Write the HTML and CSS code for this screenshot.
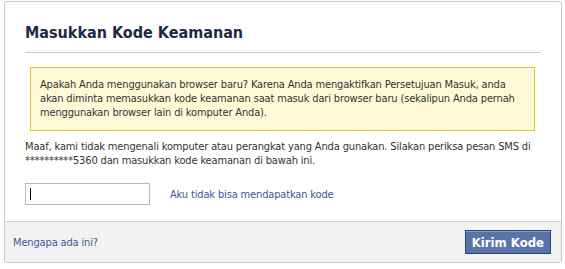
FILE: index.html
```html
<!DOCTYPE html>
<html lang="id">
<head>
    <meta charset="UTF-8">
    <meta name="viewport" content="width=device-width, initial-scale=1.0">
    <title>Masukkan Kode Keamanan</title>
    <link rel="stylesheet" href="styles.css">
</head>
<body>
    <div class="dialog">
        <div class="dialog-body">
            <h2 class="dialog-title">Masukkan Kode Keamanan</h2>

            <div class="notice">
                Apakah Anda menggunakan browser baru? Karena Anda mengaktifkan Persetujuan Masuk, anda
                akan diminta memasukkan kode keamanan saat masuk dari browser baru (sekalipun Anda pernah
                menggunakan browser lain di komputer Anda).
            </div>

            <p class="intro">
                Maaf, kami tidak mengenali komputer atau perangkat yang Anda gunakan. Silakan periksa pesan SMS di
                **********5360 dan masukkan kode keamanan di bawah ini.
            </p>

            <div class="code-row">
                <span class="code-field">
                    <input type="text" id="code" name="code" class="code-input">
                </span>
                <a href="#" class="link">Aku tidak bisa mendapatkan kode</a>
            </div>
        </div>

        <div class="dialog-footer">
            <a href="#" class="link">Mengapa ada ini?</a>
            <button type="submit" class="btn-submit">Kirim Kode</button>
        </div>
    </div>
</body>
</html>
```

FILE: styles.css
```css
body {
    margin: 0;
    background: #fff;
    font-family: "DejaVu Sans Condensed", "DejaVu Sans", sans-serif;
    font-size: 11px;
    letter-spacing: -0.15px;
    color: #333;
}

.dialog {
    width: 558px;
    margin: 1px 0 0 4px;
    box-sizing: border-box;
    border: 1px solid #c8c8c8;
    border-radius: 3px;
    overflow: hidden;
}

.dialog-body {
    padding: 21px 20px 16px 20px;
}

.dialog-title {
    margin: 0;
    padding: 0 0 9px 0;
    border-bottom: 1px solid #ccc;
    font-size: 16px;
    line-height: 20px;
    font-weight: bold;
    letter-spacing: 0;
    color: #1c2a47;
}

.notice {
    margin: 14px 6px 0 5px;
    padding: 10px 9px;
    background: #fff9d7;
    border: 1px solid #e2c822;
    line-height: 14px;
}

.intro {
    margin: 9px 0 0 0;
    line-height: 14px;
}

.code-row {
    display: flex;
    align-items: center;
    gap: 20px;
    margin-top: 15px;
}

.code-field {
    position: relative;
    display: flex;
}

.code-field::after {
    content: "";
    position: absolute;
    left: 5px;
    top: 5px;
    width: 1px;
    height: 12px;
    background: #000;
}

.code-input {
    width: 125px;
    height: 22px;
    box-sizing: border-box;
    margin: 0;
    border: 1px solid #b9b9c3;
    font-family: inherit;
    font-size: 11px;
}

.link {
    color: #3b5998;
    text-decoration: none;
}

.dialog-footer {
    display: flex;
    justify-content: space-between;
    align-items: center;
    height: 40px;
    padding: 0 10px 0 8px;
    background: #f2f2f2;
    border-top: 1px solid #ccc;
}

.btn-submit {
    height: 24px;
    padding: 0 6px;
    background: #5b74a8;
    border: 1px solid #29447e;
    box-shadow: inset 0 1px 0 #8a9cc2;
    color: #fff;
    font-family: "DejaVu Sans Condensed", "DejaVu Sans", sans-serif;
    font-size: 13px;
    font-weight: bold;
    letter-spacing: 0;
}
```
